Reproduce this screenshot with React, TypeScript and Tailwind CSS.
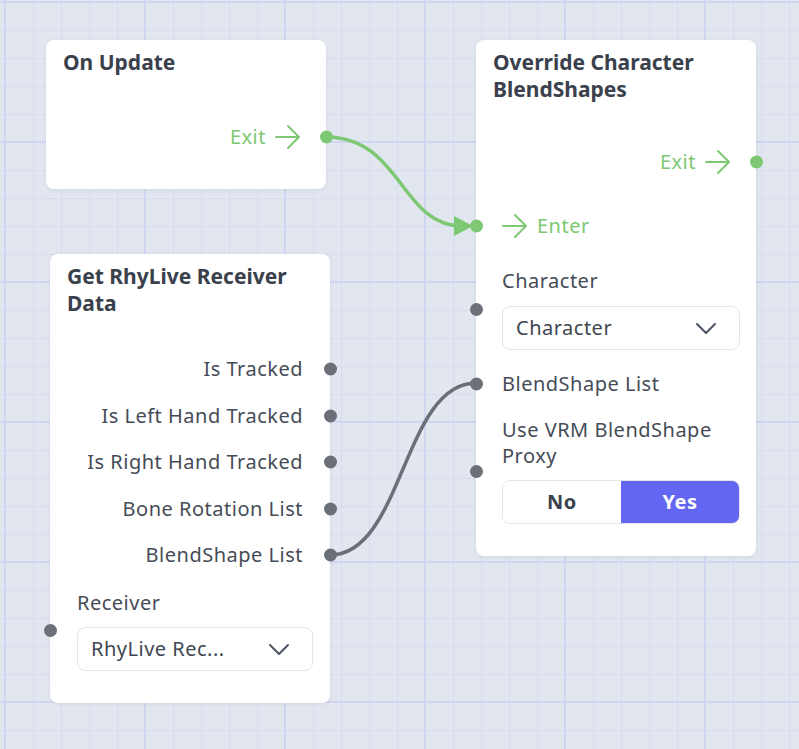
import React from "react";

const font = "font-['Noto_Sans','Open_Sans',sans-serif] tracking-[0.5px]";

function Arrow({ color = "#7dc873" }: { color?: string }) {
  return (
    <svg width="26" height="26" viewBox="0 0 26 26" fill="none" stroke={color} strokeWidth="2" strokeLinecap="round" strokeLinejoin="round">
      <path d="M1 13h23M13 2l11 11-11 11" />
    </svg>
  );
}

function Chevron() {
  return (
    <svg width="22" height="13" viewBox="0 0 22 13" fill="none" stroke="#4b5563" strokeWidth="2" strokeLinecap="round" strokeLinejoin="round">
      <path d="M2 2l9 9 9-9" />
    </svg>
  );
}

// port dot, centered on the node border
function Dot({ side, green, top }: { side: "left" | "right"; green?: boolean; top?: string }) {
  return (
    <span
      className={`absolute h-[13px] w-[13px] rounded-full ${green ? "bg-[#7dc873]" : "bg-[#6b7078]"} ${
        side === "right" ? "right-[-6.5px]" : "left-[-6.5px]"
      } ${top ?? "top-1/2 -translate-y-1/2"}`}
    />
  );
}

function Select({ value }: { value: string }) {
  return (
    <div className="flex h-[44px] items-center justify-between rounded-lg border border-[#e3e5ea] bg-white pl-[13px] pr-[22px] text-[20px] text-[#3f4651]">
      <span>{value}</span>
      <Chevron />
    </div>
  );
}

function OutRow({ label }: { label: string }) {
  return (
    <div className="relative flex h-[32px] items-center justify-end pr-[27px] text-[20px] text-[#454c57]">
      {label}
      <Dot side="right" />
    </div>
  );
}

export default function App() {
  return (
    <div
      className={`relative h-[749px] w-[799px] overflow-hidden bg-[#e2e7ef] ${font} bg-[image:linear-gradient(to_right,#d0d5f1_2px,transparent_2px),linear-gradient(to_bottom,#d0d5f1_2px,transparent_2px),linear-gradient(to_right,#d8dcf0_1px,transparent_1px),linear-gradient(to_bottom,#d8dcf0_1px,transparent_1px)] bg-[size:140px_140px,140px_140px,28px_28px,28px_28px] bg-[position:4px_1px,4px_1px,5px_2px,5px_2px]`}
    >
      {/* edges */}
      <svg className="absolute inset-0" width="799" height="749" fill="none">
        <path d="M326 137 C 401 137 401 226 462 226" stroke="#7dc873" strokeWidth="3.5" strokeLinecap="round" />
        <polygon points="454,216 473,226 454,236" fill="#7dc873" />
        <path d="M330 555 C 403 555 403 383 476 383" stroke="#6b7078" strokeWidth="3.5" strokeLinecap="round" />
      </svg>

      {/* On Update */}
      <div className="absolute left-[46px] top-[40px] flex w-[280px] flex-col rounded-lg bg-white pb-[36px] pt-[9px] shadow-[0_1px_5px_rgba(30,41,59,0.08)]">
        <div className="px-[17px] text-[21px] font-bold leading-[27px] tracking-normal text-[#3a414c]">On Update</div>
        <div className="relative mt-[45px] flex h-[32px] items-center justify-end gap-[9px] pr-[25px] text-[20px] text-[#7dc873]">
          <span>Exit</span>
          <Arrow />
          <Dot side="right" green />
        </div>
      </div>

      {/* Override Character BlendShapes */}
      <div className="absolute left-[476px] top-[40px] flex w-[280px] flex-col rounded-lg bg-white pb-[32px] pt-[9px] shadow-[0_1px_5px_rgba(30,41,59,0.08)]">
        <div className="px-[17px] text-[21px] font-bold leading-[27px] tracking-normal text-[#3a414c]">
          Override Character
          <br />
          BlendShapes
        </div>
        <div className="relative mt-[43px] flex h-[32px] items-center justify-end gap-[9px] pr-[25px] text-[20px] text-[#7dc873]">
          <span>Exit</span>
          <Arrow />
          <Dot side="right" green />
        </div>
        <div className="relative mt-[32px] flex h-[32px] items-center gap-[9px] pl-[26px] text-[20px] text-[#7dc873]">
          <Arrow />
          <span>Enter</span>
          <Dot side="left" green />
        </div>
        <div className="relative mt-[26px] flex flex-col pl-[26px] pr-[16px]">
          <div className="h-[26px] text-[20px] leading-[26px] text-[#454c57]">Character</div>
          <div className="mt-[12px]">
            <Select value="Character" />
          </div>
          <Dot side="left" top="top-[34.5px]" />
        </div>
        <div className="relative mt-[21px] h-[26px] pl-[26px] text-[20px] leading-[26px] text-[#454c57]">
          BlendShape List
          <Dot side="left" />
        </div>
        <div className="relative mt-[20px] flex flex-col pl-[26px] pr-[16px]">
          <div className="text-[20px] leading-[26px] text-[#454c57]">
            Use VRM BlendShape
            <br />
            Proxy
          </div>
          <div className="mt-[11px] flex h-[44px] overflow-hidden rounded-lg border border-[#e3e5ea] text-[20px] font-bold">
            <div className="flex flex-1 items-center justify-center bg-white text-[#3a414c]">No</div>
            <div className="flex flex-1 items-center justify-center bg-[#6366f1] text-white">Yes</div>
          </div>
          <Dot side="left" top="top-[47.5px]" />
        </div>
      </div>

      {/* Get RhyLive Receiver Data */}
      <div className="absolute left-[50px] top-[254px] flex w-[280px] flex-col rounded-lg bg-white pb-[32px] pt-[9px] shadow-[0_1px_5px_rgba(30,41,59,0.08)]">
        <div className="px-[17px] text-[21px] font-bold leading-[27px] tracking-normal text-[#3a414c]">
          Get RhyLive Receiver
          <br />
          Data
        </div>
        <div className="mt-[36px] flex flex-col gap-[14.5px]">
          <OutRow label="Is Tracked" />
          <OutRow label="Is Left Hand Tracked" />
          <OutRow label="Is Right Hand Tracked" />
          <OutRow label="Bone Rotation List" />
          <OutRow label="BlendShape List" />
        </div>
        <div className="relative mt-[19px] flex flex-col pl-[27px] pr-[17px]">
          <div className="h-[26px] text-[20px] leading-[26px] text-[#454c57]">Receiver</div>
          <div className="mt-[11px]">
            <Select value="RhyLive Rec..." />
          </div>
          <Dot side="left" top="top-[33.5px]" />
        </div>
      </div>
    </div>
  );
}
